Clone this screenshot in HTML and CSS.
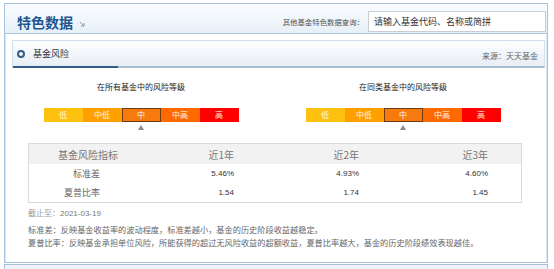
FILE: index.html
```html
<!DOCTYPE html>
<html lang="zh-CN">
<head>
<meta charset="utf-8">
<title>特色数据</title>
<link rel="stylesheet" href="styles.css">
</head>
<body>
<div class="panel">
  <div class="panel-head">
    <h1 class="title">特色数据</h1>
    <svg class="title-arrow" width="6" height="6" viewBox="0 0 6 6"><path d="M1 1 L5 5 M5 2 V5 H2" fill="none" stroke="#8a99a8" stroke-width="1"/></svg>
    <div class="search">
      <span class="search-label">其他基金特色数据查询：</span>
      <div class="search-input">请输入基金代码、名称或简拼</div>
    </div>
  </div>

  <div class="section-head">
    <span class="dot"></span>
    <span class="section-title">基金风险</span>
    <span class="source">来源：天天基金</span>
  </div>

  <div class="levels">
    <div class="level">
      <div class="level-title">在所有基金中的风险等级</div>
      <div class="bar">
        <span class="seg seg-low">低</span>
        <span class="seg seg-midlow">中低</span>
        <span class="seg seg-mid is-active">中</span>
        <span class="seg seg-midhigh">中高</span>
        <span class="seg seg-high">高</span>
      </div>
      <div class="pointer"></div>
    </div>
    <div class="level">
      <div class="level-title">在同类基金中的风险等级</div>
      <div class="bar">
        <span class="seg seg-low">低</span>
        <span class="seg seg-midlow">中低</span>
        <span class="seg seg-mid is-active">中</span>
        <span class="seg seg-midhigh">中高</span>
        <span class="seg seg-high">高</span>
      </div>
      <div class="pointer"></div>
    </div>
  </div>

  <div class="risk-table">
    <div class="row row-head">
      <div class="cell cell-name">基金风险指标</div>
      <div class="cell cell-num">近1年</div>
      <div class="cell cell-num">近2年</div>
      <div class="cell cell-num">近3年</div>
      <div class="cell"></div>
    </div>
    <div class="row">
      <div class="cell cell-label">标准差</div>
      <div class="cell cell-num num">5.46%</div>
      <div class="cell cell-num num">4.93%</div>
      <div class="cell cell-num num">4.60%</div>
      <div class="cell"></div>
    </div>
    <div class="row">
      <div class="cell cell-label">夏普比率</div>
      <div class="cell cell-num num">1.54</div>
      <div class="cell cell-num num">1.74</div>
      <div class="cell cell-num num">1.45</div>
      <div class="cell"></div>
    </div>
  </div>

  <p class="date"><span class="date-label">截止至：</span><span class="date-value">2021-03-19</span></p>
  <p class="note">标准差：反映基金收益率的波动程度，标准差越小，基金的历史阶段收益越稳定。</p>
  <p class="note">夏普比率：反映基金承担单位风险，所能获得的超过无风险收益的超额收益，夏普比率越大，基金的历史阶段绩效表现越佳。</p>
</div>
<div class="panel-next"></div>
</body>
</html>
```

FILE: styles.css
```css
* { box-sizing: border-box; margin: 0; padding: 0; }

body {
  margin: 0;
  width: 554px;
  height: 269px;
  overflow: hidden;
  background: #ffffff;
  font-family: "Noto Sans CJK SC", "Liberation Sans", sans-serif;
  color: #333;
}

.panel {
  margin: 3px 0 0 4px;
  width: 544px;
  height: 260px;
  border: 1px solid #a9c3de;
  box-shadow: inset 1px 0 0 #dbe7f3, inset -1px 0 0 #dbe7f3;
  background: #ffffff;
}

.panel-head {
  height: 30px;
  padding-top: 6px;
  display: flex;
  align-items: center;
  border-bottom: 1px solid #aec5dc;
  background: linear-gradient(#fbfdff, #e7eff7);
}

.title {
  margin-left: 12px;
  font-size: 14px;
  line-height: 16px;
  font-weight: bold;
  color: #1c5791;
}

.title-arrow {
  margin: 5px 0 0 6px;
}

.search {
  margin-left: auto;
  margin-right: 1px;
  display: flex;
  align-items: center;
}

.search-label {
  font-size: 7.4px;
  color: #555;
  margin-right: 4px;
}

.search-input {
  width: 178px;
  height: 21px;
  border: 1px solid #c9cdd2;
  background: #fff;
  padding-left: 5px;
  font-size: 9px;
  line-height: 19px;
  color: #333;
}

.section-head {
  position: relative;
  margin: 6px 2px 0 7px;
  height: 28px;
  display: flex;
  align-items: center;
  border: 1px solid #d2deea;
  border-bottom: 2px solid #a8bccf;
  background: linear-gradient(#fdfeff, #e8eef5);
}

.section-head::after {
  content: "";
  position: absolute;
  left: 0;
  bottom: -2px;
  width: 105px;
  height: 2px;
  background: #2f5f86;
}

.dot {
  width: 8px;
  height: 8px;
  margin-left: 4px;
  border: 2px solid #335f86;
  border-radius: 50%;
}

.section-title {
  margin-left: 8px;
  font-size: 9px;
  color: #333;
}

.source {
  margin-left: auto;
  margin-right: 6px;
  margin-top: 3px;
  font-size: 8px;
  color: #666;
}

.levels {
  display: flex;
  margin: 13px 0 0 5px;
}

.level {
  width: 262px;
  display: flex;
  flex-direction: column;
  align-items: center;
}

.level-title {
  font-size: 8px;
  line-height: 12px;
  color: #222;
}

.bar {
  margin-top: 15px;
  display: flex;
  width: 195px;
  height: 14px;
}

.seg {
  width: 39px;
  height: 14px;
  font-size: 8px;
  line-height: 14px;
  text-align: center;
  color: #fff6e0;
}

.seg-low { background: #fec10f; }
.seg-midlow { background: #ffa000; }
.seg-mid { background: #f67a0e; }
.seg-midhigh { background: #ff6a00; }
.seg-high { background: #ff0000; }

.is-active {
  border: 1px solid #6e3a12;
  line-height: 12px;
}

.pointer {
  margin-top: 3px;
  width: 0;
  height: 0;
  border-left: 3px solid transparent;
  border-right: 3px solid transparent;
  border-bottom: 5px solid #8a8a8a;
}

.risk-table {
  margin: 13px 0 0 23px;
  width: 494px;
  border: 1px solid #dadada;
}

.row {
  display: grid;
  grid-template-columns: 118px 87px 125px 129px 1fr;
  height: 19px;
  align-items: center;
}

.row-head {
  height: 20px;
  background: #f2f2f2;
}

.cell {
  font-size: 9px;
  white-space: nowrap;
}

.row-head .cell {
  font-size: 10px;
  color: #777;
}

.cell-name { text-align: center; }

.cell-label {
  text-align: right;
  padding-right: 47px;
  color: #666;
}

.cell-num { text-align: right; }

.num {
  font-family: "Liberation Sans", Arial, sans-serif;
  font-size: 8px;
  color: #333;
}

.date {
  margin: 5px 0 0 23px;
  font-size: 8px;
  line-height: 10px;
}

.date-label { color: #999; }

.date-value {
  font-family: "Liberation Sans", Arial, sans-serif;
  color: #777;
}

.note {
  margin-left: 23px;
  font-size: 8.2px;
  line-height: 13px;
  color: #666;
  white-space: nowrap;
}

.date + .note { margin-top: 4px; }

.panel-next {
  margin: 1px 0 0 4px;
  width: 544px;
  height: 12px;
  border: 1px solid #a9c3de;
  background: #eef3f9;
}
```
